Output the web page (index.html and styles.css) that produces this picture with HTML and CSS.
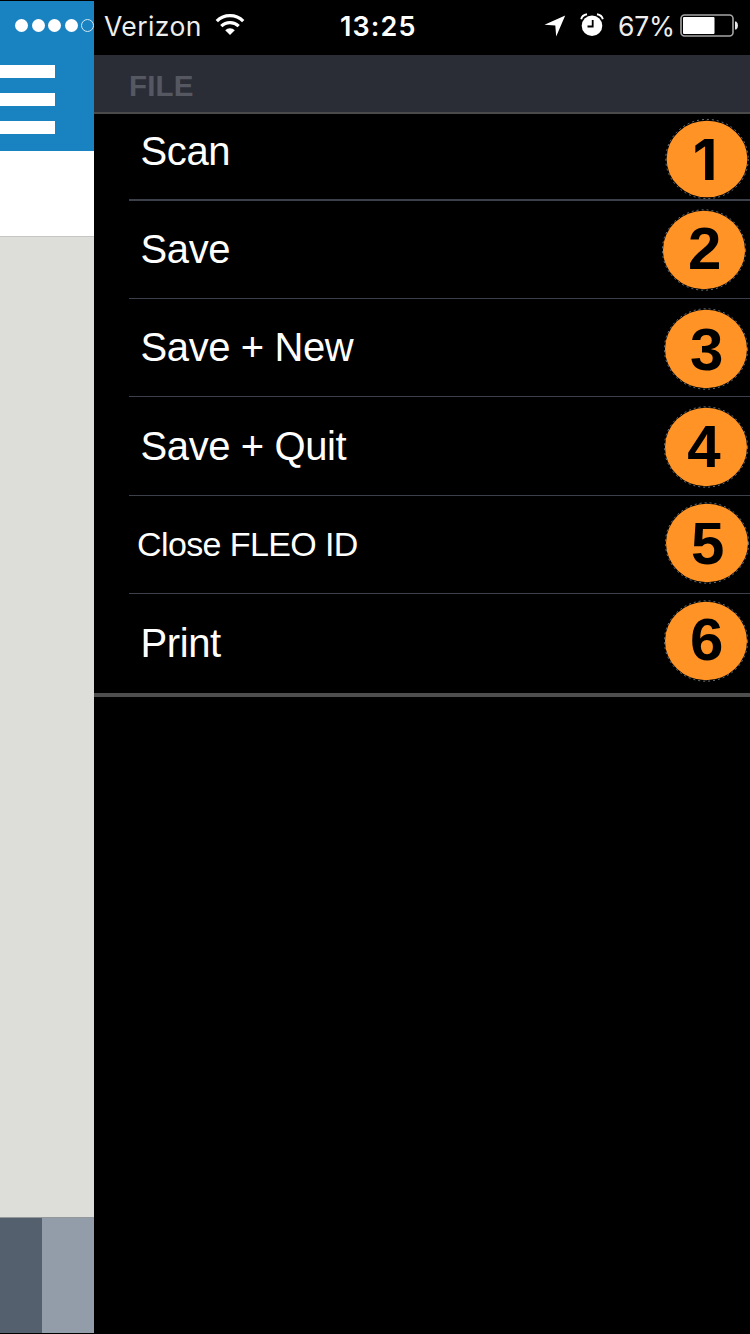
FILE: index.html
```html
<!DOCTYPE html>
<html lang="en">
<head>
<meta charset="utf-8">
<title>File menu</title>
<link rel="stylesheet" href="styles.css">
</head>
<body>
<div class="screen">
  <aside class="page-edge">
    <header class="edge-header">
      <div class="signal"><i class="dot"></i><i class="dot"></i><i class="dot"></i><i class="dot"></i><i class="dot empty"></i></div>
      <div class="burger"><i></i><i></i><i></i></div>
    </header>
    <div class="edge-blank"></div>
    <div class="edge-body"></div>
    <footer class="edge-footer"><i class="tab-dark"></i><i class="tab-light"></i></footer>
  </aside>
  <main class="drawer">
    <div class="status">
      <span class="carrier">Verizon</span>
      <svg class="wifi" width="30" height="22" viewBox="0 0 30 22">
        <path d="M1.8 7.1A18.8 18.8 0 0 1 28.2 7.1" fill="none" stroke="#fff" stroke-width="3.3"/>
        <path d="M6.3 12.2A12.4 12.4 0 0 1 23.7 12.2" fill="none" stroke="#fff" stroke-width="3.2"/>
        <path d="M15 21L10.2 16.2A6.8 6.8 0 0 1 19.8 16.2Z" fill="#fff"/>
      </svg>
      <span class="time">13:25</span>
      <svg class="arrow" width="22" height="22" viewBox="0 0 22 22"><path d="M21.2.6L.5 9.7L11.3 10.6L12.2 21.4Z" fill="#fff"/></svg>
      <svg class="alarm" width="24" height="24" viewBox="0 0 24 24">
        <circle cx="12" cy="12.8" r="10.3" fill="#fff"/>
        <path d="M1.2 6.2C1.8 3.6 4 1.8 7 1.3M22.8 6.2C22.2 3.6 20 1.8 17 1.3" fill="none" stroke="#fff" stroke-width="1.9"/>
        <path d="M12.7 7V13.5H7.5" fill="none" stroke="#000" stroke-width="1.8"/>
      </svg>
      <span class="percent">67%</span>
      <svg class="battery" width="60" height="24" viewBox="0 0 60 24">
        <rect x="1" y="1" width="52" height="21" rx="3.5" fill="none" stroke="#a5a5a5" stroke-width="1.6"/>
        <rect x="3" y="3" width="31.5" height="17" rx="1" fill="#fff"/>
        <path d="M55 7.5H56.2Q58 9 58 11.5T56.2 15.5H55Z" fill="#e8e8e8"/>
      </svg>
    </div>
    <h1 class="title">FILE</h1>
    <ul class="menu">
      <li class="item first">Scan
        <svg class="badge b1" width="84" height="82" viewBox="0 0 84 82"><ellipse class="disc" cx="42" cy="41" rx="40.4" ry="38.3"/><ellipse class="ants" cx="42" cy="41" rx="41.2" ry="39.6"/><text class="one" x="40" y="62">1</text></svg></li>
      <li class="item">Save
        <svg class="badge b2" width="84" height="82" viewBox="0 0 84 82"><ellipse class="disc" cx="42" cy="41" rx="41" ry="39.3"/><ellipse class="ants" cx="42" cy="41" rx="41.6" ry="40.2"/><text x="42.8" y="60">2</text></svg></li>
      <li class="item">Save + New
        <svg class="badge b3" width="84" height="82" viewBox="0 0 84 82"><ellipse class="disc" cx="42" cy="41" rx="41" ry="39.3"/><ellipse class="ants" cx="42" cy="41" rx="41.6" ry="40.2"/><text x="42.6" y="62">3</text></svg></li>
      <li class="item">Save + Quit
        <svg class="badge b4" width="84" height="82" viewBox="0 0 84 82"><ellipse class="disc" cx="42" cy="41" rx="41" ry="39.3"/><ellipse class="ants" cx="42" cy="41" rx="41.6" ry="40.2"/><text x="39.9" y="61">4</text></svg></li>
      <li class="item close">Close FLEO ID
        <svg class="badge b5" width="84" height="82" viewBox="0 0 84 82"><ellipse class="disc" cx="42" cy="41" rx="41" ry="39.3"/><ellipse class="ants" cx="42" cy="41" rx="41.6" ry="40.2"/><text x="42.8" y="61.5">5</text></svg></li>
      <li class="item">Print
        <svg class="badge b6" width="84" height="82" viewBox="0 0 84 82"><ellipse class="disc" cx="42" cy="41" rx="41" ry="39.3"/><ellipse class="ants" cx="42" cy="41" rx="41.6" ry="40.2"/><text x="42.6" y="60">6</text></svg></li>
    </ul>
  </main>
</div>
</body>
</html>
```
FILE: styles.css
```css
* { box-sizing: border-box; }
body { margin: 0; background: #000; font-family: "Liberation Sans", Arial, sans-serif; }
.screen { display: flex; width: 750px; height: 1334px; overflow: hidden; background: #000; }
.page-edge { display: flex; flex-direction: column; width: 94px; height: 1334px; padding: 1px 0; overflow: hidden; }
.edge-header { height: 150px; background: #1982c1; }
.signal { display: flex; gap: 3.5px; width: 100px; padding: 18px 0 0 15px; }
.dot { flex: none; width: 13px; height: 13px; border-radius: 50%; background: #fff; }
.empty { background: none; border: 1.5px solid #d5e8f4; }
.burger { display: flex; flex-direction: column; gap: 15.4px; padding-top: 33px; }
.burger i { width: 55px; height: 12.6px; background: #fff; }
.edge-blank { height: 85px; background: #fff; }
.edge-body { flex: 1; background: #dddeda; border-top: 1px solid #c6c7c4; }
.edge-footer { display: flex; height: 116px; border-top: 1px solid #93989a; }
.tab-dark { width: 42px; background: #54606e; }
.tab-light { flex: 1; background: #939da9; }

.drawer { width: 656px; }
.status { display: flex; align-items: flex-start; height: 55px; color: #eee; font: 400 26.5px/31px Inter, sans-serif; white-space: nowrap; }
.carrier { width: 111px; padding: 10.5px 0 0 10px; letter-spacing: .4px; }
.wifi { margin: 14px 0 0 10px; }
.time { width: 205px; padding: 11px 0 0 95px; color: #fff; font-size: 27px; font-weight: 600; letter-spacing: 1.1px; }
.arrow { margin: 14.5px 0 0 94px; }
.alarm { margin: 13px 0 0 14px; }
.percent { width: 62px; padding: 11px 0 0 14px; letter-spacing: -.2px; }
.battery { margin: 13.5px 0 0 14px; }
.title { height: 59px; margin: 0; padding: 3px 0 0 35px; background: #2a2d36; border-bottom: 2px solid #4a4a4a; color: #555861; font: bold 29.5px/56px "Liberation Sans", Arial, sans-serif; letter-spacing: .2px; }
.menu { margin: 0; padding: 0 0 0 35px; list-style: none; border-bottom: 4px solid #4e4e4e; }
.item { position: relative; display: flex; align-items: center; height: 98px; padding: 0 0 0 11.5px; border-bottom: 1px solid #3c404a; color: #fff; font-size: 40px; letter-spacing: -.4px; white-space: nowrap; }
.first { height: 87px; padding-bottom: 11px; border-bottom-width: 2px; }
.item:nth-child(4) { height: 99px; }
.item:last-child { height: 99px; border-bottom: 0; }
.close { padding: 0 0 0 8px; font-size: 34px; letter-spacing: -.6px; }
.badge { position: absolute; overflow: visible; letter-spacing: 0; }
.b1 { top: 3.5px; right: 1px; }
.b2 { top: 7.5px; right: 4px; }
.b3 { top: 8.5px; right: 2px; }
.b4 { top: 8.5px; right: 2px; }
.b5 { top: 5.5px; right: 1px; }
.b6 { top: 5.5px; right: 2px; }
.badge text { font: bold 60px "Liberation Sans", Arial, sans-serif; text-anchor: middle; fill: #000; }
.badge .one { font: bold 57px Inter, sans-serif; }
.disc { fill: #ff9326; }
.ants { fill: none; stroke: #8796a0; stroke-width: .8; stroke-dasharray: 2 3; }
```
